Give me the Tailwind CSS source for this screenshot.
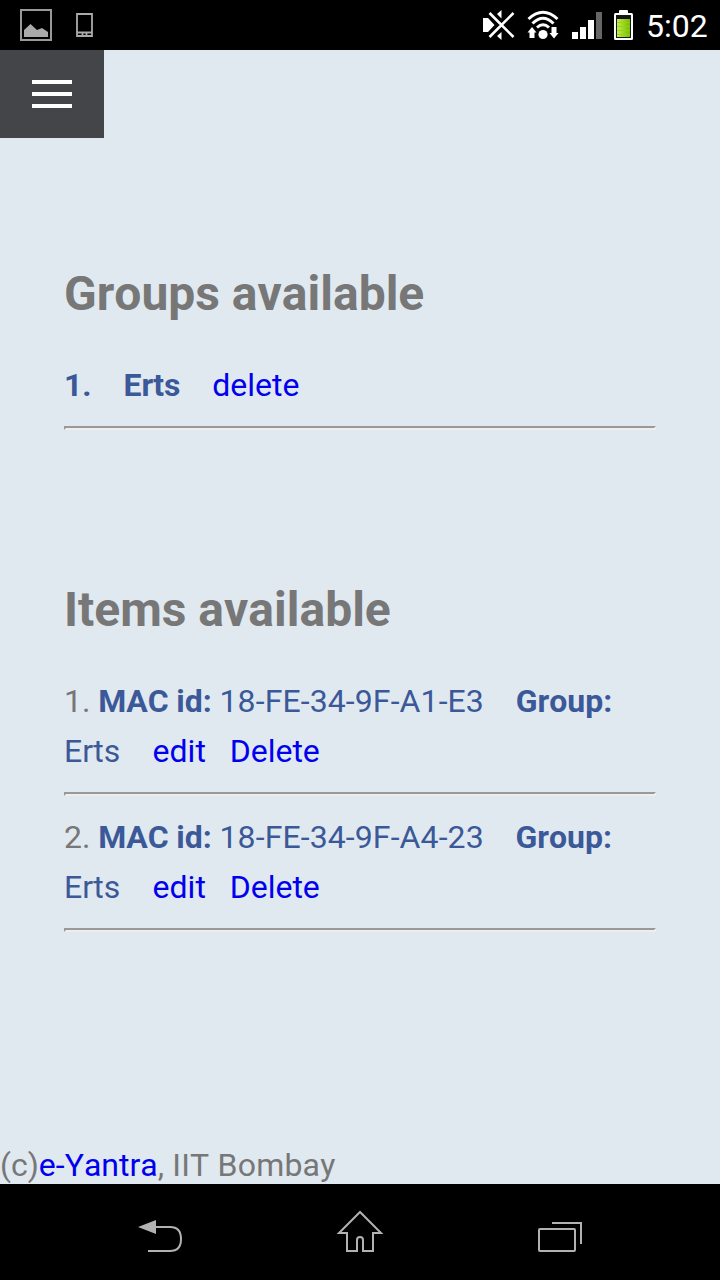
<!DOCTYPE html>
<html lang="en">
<head>
<meta charset="utf-8">
<title>Groups and items</title>
<script src="https://cdn.jsdelivr.net/npm/@tailwindcss/browser@4"></script>
</head>
<body class="flex flex-col w-[720px] h-[1280px] overflow-hidden bg-[#e1e9f0] font-[Roboto,sans-serif] text-[32px] leading-[50px] text-[#777] [font-kerning:none]">
<header class="flex h-[50px] shrink-0 items-start bg-black text-white">
  <svg class="w-[120px] h-[50px]" viewBox="0 0 120 50" fill="none">
    <rect x="21" y="10" width="30" height="30" stroke="#999" stroke-width="2"/>
    <path d="M24 37V30L30.500 24L37 30L42 28L48 32V37Z" fill="#aaa"/>
    <path d="M77 14H92V36H77ZM77 32.500H92M82.500 33V36M86.500 33V36" stroke="#aaa" stroke-width="1.800"/>
  </svg>
  <svg class="ml-[355px] w-[165px] h-[50px]" viewBox="475 0 165 50" fill="none">
    <path d="M483 18H488L494.500 25L488 32H483ZM497 14L501.500 10V18.500ZM497 36L501.500 32V40Z" fill="#fff"/>
    <path d="M489.500 13L513.500 37M513.500 13L489.500 37" stroke="#000" stroke-width="5"/>
    <path d="M489.500 13L513.500 37M513.500 13L489.500 37" stroke="#fff" stroke-width="2.600"/>
    <path d="M528.500 19Q543 5.500 557.500 19M532.500 23.500Q543 13 553.500 23.500M537 27.500Q543 22 549 27.500" stroke="#fff" stroke-width="3"/>
    <circle cx="543" cy="34.500" r="4.600" fill="#fff"/>
    <path d="M532 27L536.500 32.500H534.500V38H529.500V32.500H527.500ZM554 38.500L549.500 33H551.500V27H556.500V33H558.500Z" fill="#fff"/>
    <path d="M572 32H578V39H572ZM580 27H586V39H580ZM588 20H594V39H588Z" fill="#fff"/>
    <path d="M596 12H602V39H596Z" fill="#666"/>
    <rect x="619" y="10" width="9" height="4" rx="1" fill="#fff"/>
    <rect x="614" y="13" width="19" height="27" rx="1.500" fill="#fff"/>
    <rect x="616" y="15" width="15" height="23" fill="#161616"/>
    <defs><linearGradient id="charge"><stop stop-color="#c1ee48"/><stop offset="1" stop-color="#79bb00"/></linearGradient></defs>
    <rect x="617" y="19" width="13" height="18" fill="url(#charge)"/>
    <path d="M617 22.500H630M617 26.500H630M617 30.500H630M617 34.500H630" stroke="#8ed411" stroke-width=".8"/>
  </svg>
  <span class="ml-[6px] mt-[1px] text-[32px] leading-[50px] whitespace-nowrap">5:02</span>
</header>
<button class="flex flex-col w-[104px] h-[88px] shrink-0 items-center justify-center gap-2 bg-[#444549]" aria-label="Menu">
  <span class="w-10 h-1 bg-white"></span>
  <span class="w-10 h-1 bg-white"></span>
  <span class="w-10 h-1 bg-white"></span>
</button>
<main class="flex-1 px-16 pt-[126px]">
  <section>
    <h1 class="text-[48px] leading-[60px] font-bold">Groups available</h1>
    <p class="mt-9 text-[#3b5998] whitespace-nowrap"><b>1.&nbsp;&nbsp;&nbsp; Erts</b>&nbsp;&nbsp;&nbsp; <a class="text-[#00e]">delete</a></p>
    <hr class="mt-4 h-1 border-2 border-t-[#999] border-l-[#999] border-r-[#eee] border-b-[#eee]">
  </section>
  <section class="mt-[150px]">
    <h1 class="text-[48px] leading-[60px] font-bold">Items available</h1>
    <p class="mt-9 text-[#3b5998] whitespace-nowrap"><span class="text-[#777]">1. </span><b class="tracking-[-0.1px]">MAC id:</b> <span class="tracking-[0.1px]">18-FE-34-9F-A1-E3</span>&nbsp;&nbsp;&nbsp; <b>Group:</b><br><span class="tracking-[0.1px]">Erts&nbsp;&nbsp;&nbsp; </span><a class="text-[#00e]">edit</a>&nbsp;&nbsp; <a class="text-[#00e]">Delete</a></p>
    <hr class="mt-4 h-1 border-2 border-t-[#999] border-l-[#999] border-r-[#eee] border-b-[#eee]">
    <p class="mt-4 text-[#3b5998] whitespace-nowrap"><span class="text-[#777]">2. </span><b class="tracking-[-0.1px]">MAC id:</b> <span class="tracking-[0.1px]">18-FE-34-9F-A4-23</span>&nbsp;&nbsp;&nbsp; <b>Group:</b><br><span class="tracking-[0.1px]">Erts&nbsp;&nbsp;&nbsp; </span><a class="text-[#00e]">edit</a>&nbsp;&nbsp; <a class="text-[#00e]">Delete</a></p>
    <hr class="mt-4 h-1 border-2 border-t-[#999] border-l-[#999] border-r-[#eee] border-b-[#eee]">
  </section>
</main>
<footer class="h-[38px] shrink-0 leading-[38px]">(c)<a class="text-[#00e]">e-Yantra</a><span class="tracking-[0.2px]">, IIT Bombay</span></footer>
<nav class="flex h-24 shrink-0 bg-black">
  <svg class="w-[720px] h-24" viewBox="0 1184 720 96" fill="none" stroke="#b2b2b2" stroke-width="2">
    <path d="M138 1227L156 1220V1234Z" fill="#b2b2b2" stroke="none"/>
    <path d="M155 1227H170Q181 1227 181 1239Q181 1251 170 1251H148"/>
    <path d="M360 1212L339 1233H347V1251H357V1240Q357 1237 360 1237Q363 1237 363 1240V1251H373V1233H381Z"/>
    <rect x="539" y="1229" width="36" height="22" rx="1"/>
    <path d="M552 1223H581V1244"/>
  </svg>
</nav>
</body>
</html>
